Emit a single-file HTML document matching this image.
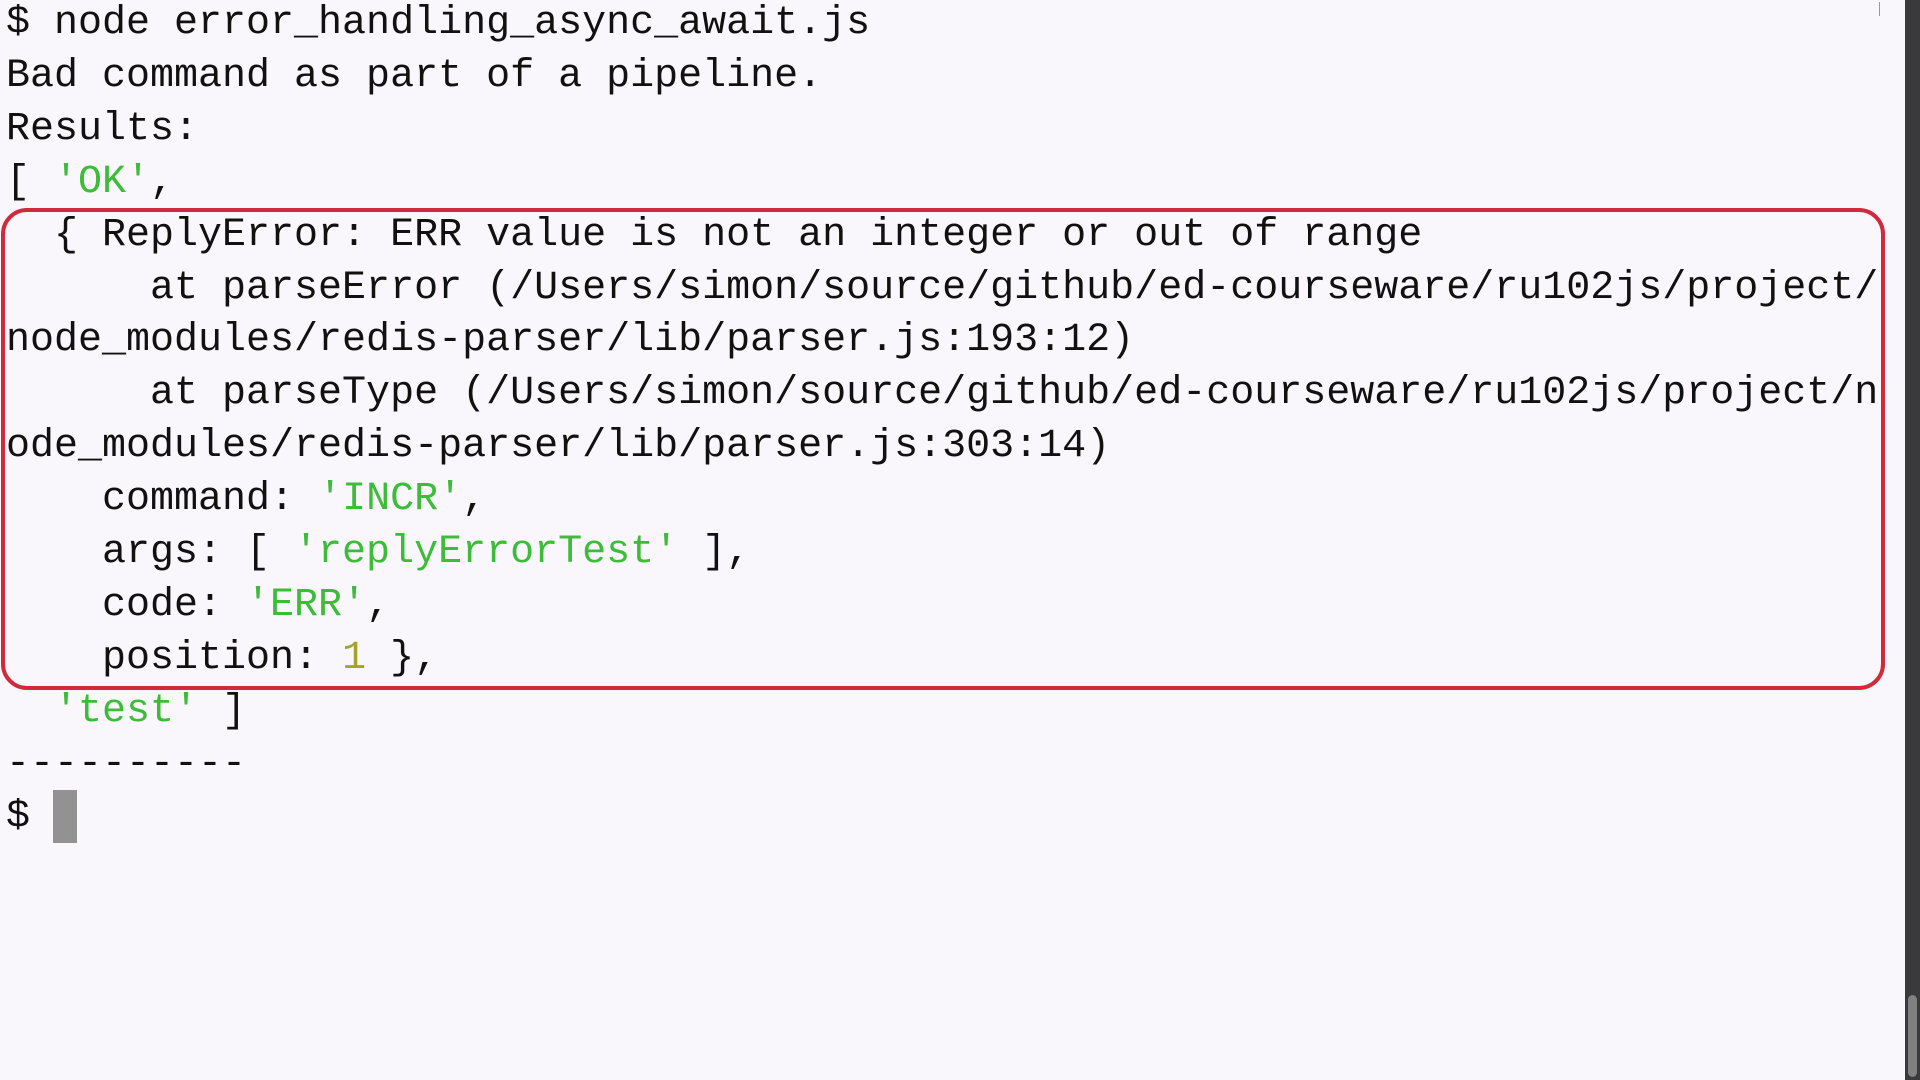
<!DOCTYPE html>
<html><head><meta charset="utf-8"><style>
html,body{margin:0;padding:0;width:1920px;height:1080px;overflow:hidden;background:#f9f7fc}
pre{position:absolute;left:6px;top:-2px;margin:0;font-family:"Liberation Mono",monospace;font-size:40px;line-height:52.9px;color:#111;letter-spacing:0}
.g{color:#3cbc38}.y{color:#a3a52a}
.box{position:absolute;left:1px;top:208px;width:1876px;height:474px;border:4px solid #d02a3c;border-radius:26px}
.sb{position:absolute;left:1905px;top:0;width:15px;height:1080px;background:#3a3a3c}
.th{position:absolute;left:1908px;top:995px;width:9px;height:82px;border-radius:5px;background:#808080}
.cur{position:absolute;left:53px;top:790px;width:24px;height:53px;background:#929292}
.bar{position:absolute;left:1879px;top:2px;width:1px;height:14px;background:#999}
</style></head><body>
<div class="box"></div>
<pre>$ node error_handling_async_await.js
Bad command as part of a pipeline.
Results:
[ <span class="g">'OK'</span>,
  { ReplyError: ERR value is not an integer or out of range
      at parseError (/Users/simon/source/github/ed-courseware/ru102js/project/
node_modules/redis-parser/lib/parser.js:193:12)
      at parseType (/Users/simon/source/github/ed-courseware/ru102js/project/n
ode_modules/redis-parser/lib/parser.js:303:14)
    command: <span class="g">'INCR'</span>,
    args: [ <span class="g">'replyErrorTest'</span> ],
    code: <span class="g">'ERR'</span>,
    position: <span class="y">1</span> },
  <span class="g">'test'</span> ]
----------
$ </pre>
<div class="cur"></div>
<div class="bar"></div>
<div class="sb"></div><div class="th"></div>
</body></html>
